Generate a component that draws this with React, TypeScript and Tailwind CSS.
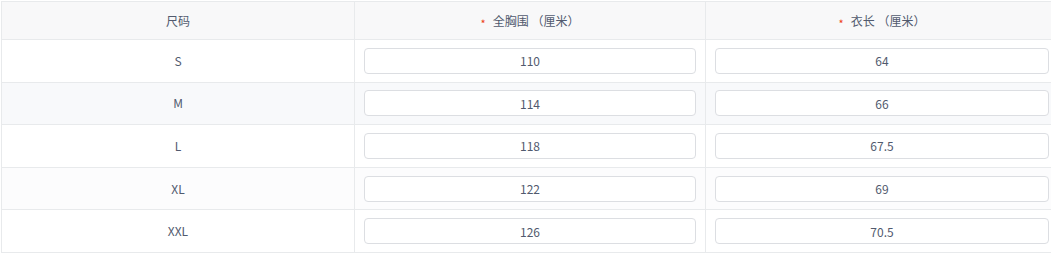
import React from 'react';

const rows = [
  { size: 'S', chest: '110', length: '64' },
  { size: 'M', chest: '114', length: '66' },
  { size: 'L', chest: '118', length: '67.5' },
  { size: 'XL', chest: '122', length: '69' },
  { size: 'XXL', chest: '126', length: '70.5' },
];

const rowBg = ['bg-white', 'bg-[#f8f9fb]', 'bg-white', 'bg-[#fcfcfd]', 'bg-white'];

const Cell: React.FC<{ children: React.ReactNode; last?: boolean }> = ({ children, last }) => (
  <div className={`flex items-center justify-center px-[9px] ${last ? '' : 'border-r border-[#e8eaec]'}`}>
    {children}
  </div>
);

const SizeInput: React.FC<{ value: string }> = ({ value }) => (
  <input
    readOnly
    value={value}
    className="w-full h-[26px] rounded-[4px] border border-[#dcdee2] bg-white text-center text-[12px] text-[#515a6e] outline-none"
  />
);

export default function App() {
  return (
    <div className="w-[1051px] h-[255px] overflow-hidden bg-white pl-px pt-px" style={{ fontFamily: '"Noto Sans CJK SC", "Noto Sans", sans-serif' }}>
      <div className="w-[1058px] border-l border-t border-[#e8eaec] text-[12px] text-[#515a6e]">
        <div className="grid grid-cols-[353px_351px_352px] h-[38px] bg-[#f8f8f9] border-b border-[#e8eaec]">
          <Cell>尺码</Cell>
          <Cell>
            <span className="text-[#ed4014] mr-[7px] text-[11px] leading-none mt-[6px]">*</span>全胸围 （厘米）
          </Cell>
          <Cell last>
            <span className="text-[#ed4014] mr-[7px] text-[11px] leading-none mt-[6px]">*</span>衣长 （厘米）
          </Cell>
        </div>
        {rows.map((r, i) => (
          <div key={r.size} className={`grid grid-cols-[353px_351px_352px] h-[42.6px] border-b border-[#e8eaec] ${rowBg[i]}`}>
            <Cell>{r.size}</Cell>
            <Cell>
              <SizeInput value={r.chest} />
            </Cell>
            <Cell last>
              <SizeInput value={r.length} />
            </Cell>
          </div>
        ))}
      </div>
    </div>
  );
}
